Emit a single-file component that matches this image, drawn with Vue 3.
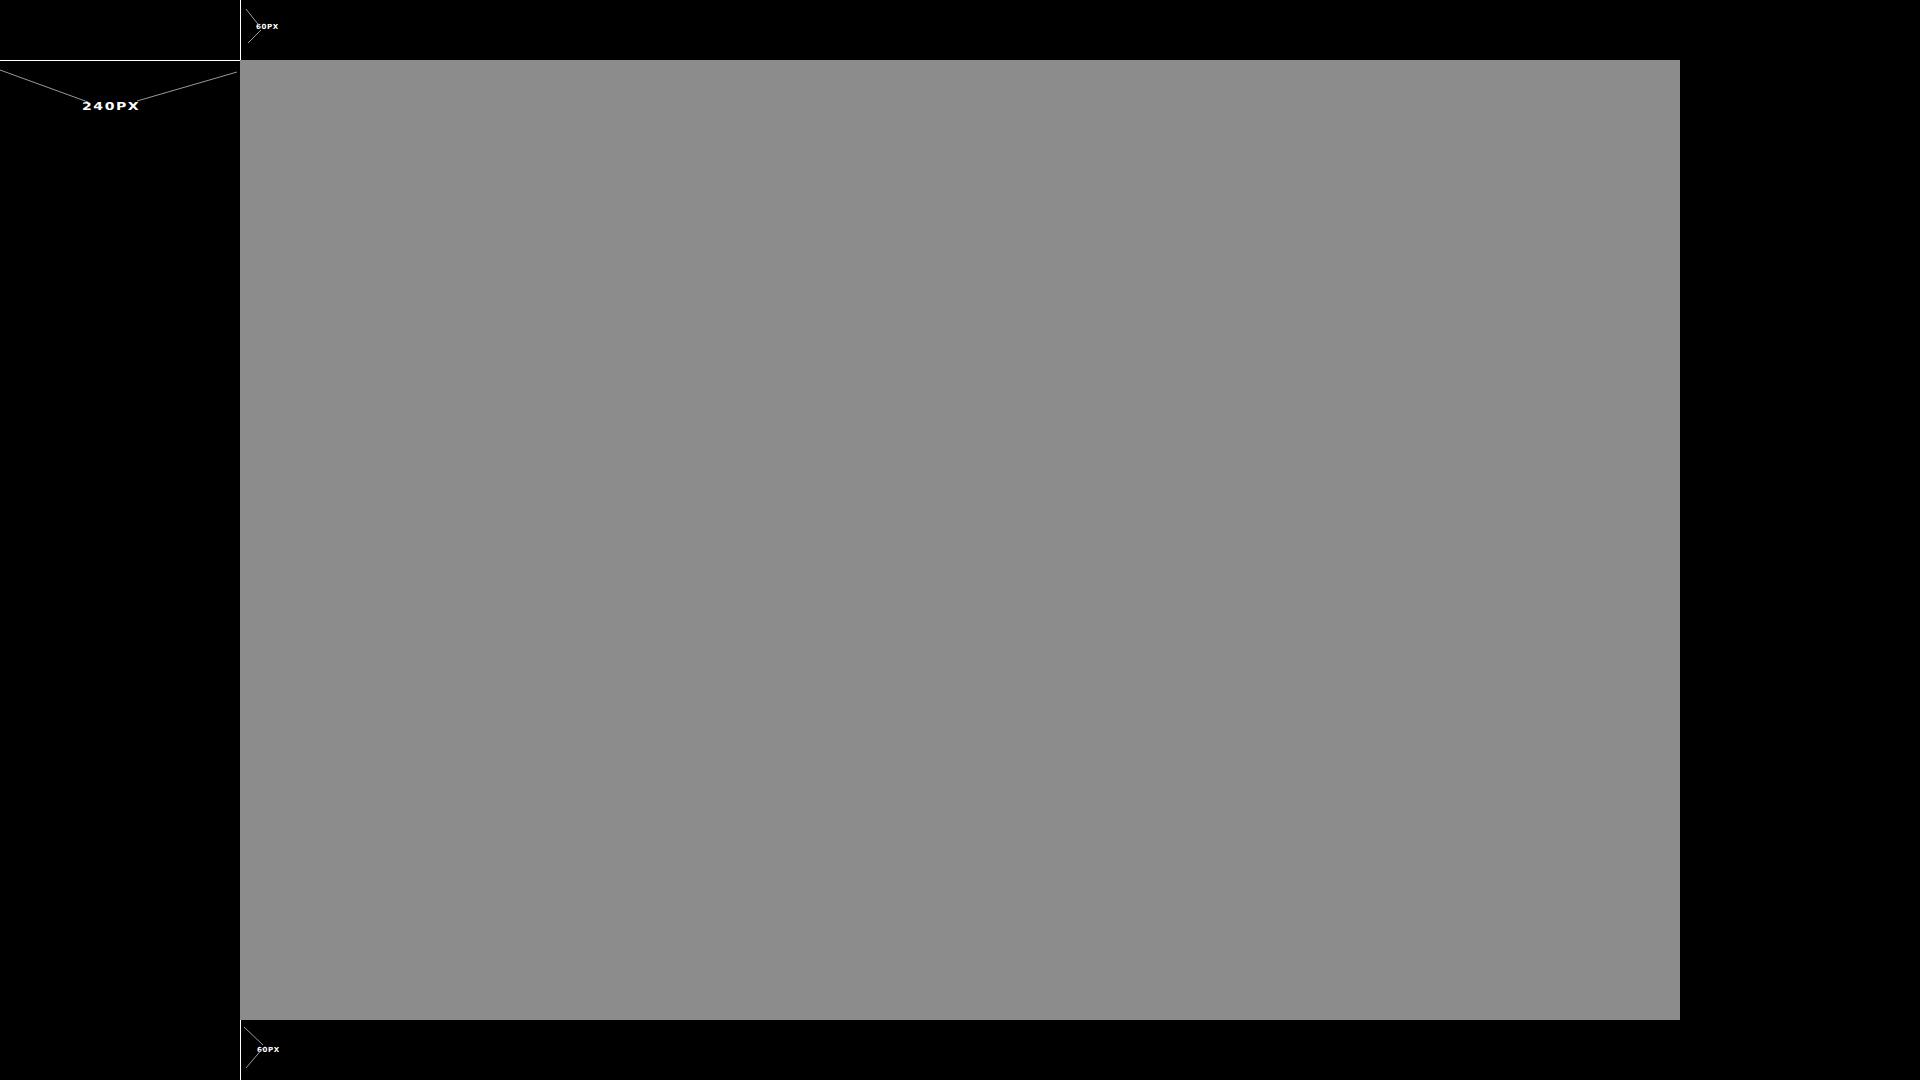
<script setup>
// ruler cells round the safe area, all sizes in px
const sideLines = [
  { x1: 0, y1: 9, x2: 88, y2: 41 },
  { x1: 137, y1: 40, x2: 237, y2: 11 }
]
const topLines = [
  { x1: 5, y1: 9, x2: 20, y2: 28 },
  { x1: 20, y1: 30, x2: 7, y2: 43 }
]
const bottomLines = [
  { x1: 3, y1: 7, x2: 22, y2: 25 },
  { x1: 22, y1: 28, x2: 5, y2: 48 }
]
</script>

<template>
  <div class="page">
    <div class="corner"></div>
    <div class="strip">
      <svg class="marks" width="60" height="60">
        <line v-for="(l, i) in topLines" :key="i" v-bind="l" />
      </svg>
      <span class="tiny">60PX</span>
    </div>
    <div class="corner"></div>

    <div class="side">
      <svg class="marks" width="240" height="60">
        <line v-for="(l, i) in sideLines" :key="i" v-bind="l" />
      </svg>
      <span class="big">240PX</span>
    </div>
    <div class="stage"></div>
    <div class="corner"></div>

    <div class="corner"></div>
    <div class="strip strip-bottom">
      <svg class="marks" width="60" height="60">
        <line v-for="(l, i) in bottomLines" :key="i" v-bind="l" />
      </svg>
      <span class="tiny">60PX</span>
    </div>
    <div class="corner"></div>
  </div>
</template>

<style scoped>
.page {
  display: grid;
  grid-template-columns: 240px 1440px 240px;
  grid-template-rows: 60px 960px 60px;
  width: 1920px;
  height: 1080px;
  background: #000;
  color: #fff;
  font-family: "DejaVu Sans", sans-serif;
  font-weight: 700;
  overflow: hidden;
}

.strip {
  position: relative;
  border-left: 1px solid #fff;
  padding: 23px 0 0 15px;
}

.strip-bottom {
  padding: 26px 0 0 16px;
}

.side {
  position: relative;
  border-top: 1px solid #fff;
  padding: 39px 0 0 82px;
}

.stage {
  background: #8c8c8c;
}

.marks {
  position: absolute;
  left: 0;
  top: 0;
}

.marks line {
  stroke: #999;
  stroke-width: 1;
}

.big {
  display: block;
  width: 56px;
  font-size: 11px;
  line-height: 13px;
  letter-spacing: 1.2px;
  transform: scaleX(1.28);
  transform-origin: left center;
  white-space: nowrap;
}

.tiny {
  display: block;
  width: 23px;
  font-size: 7px;
  line-height: 9px;
  letter-spacing: 0.6px;
  white-space: nowrap;
}
</style>

<style>
html,
body {
  margin: 0;
  background: #000;
}
</style>
